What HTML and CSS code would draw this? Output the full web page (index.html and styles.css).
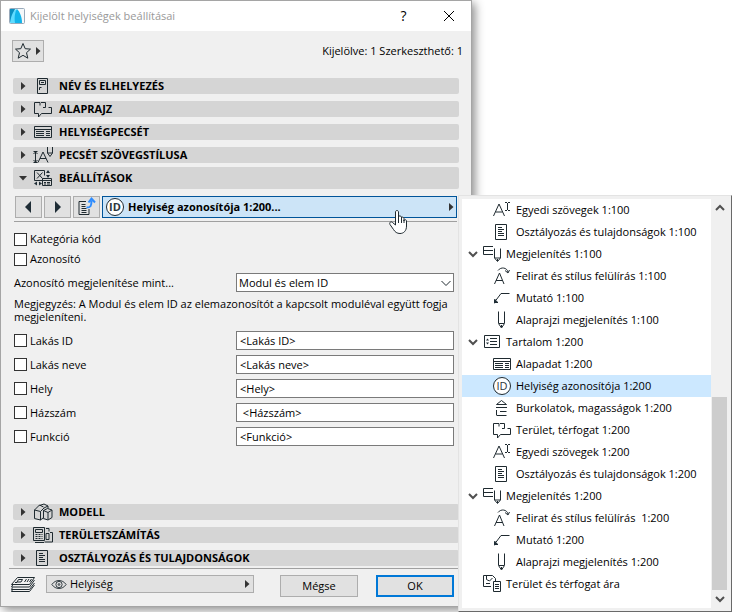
FILE: index.html
```html
<!DOCTYPE html>
<html lang="hu">
<head>
<meta charset="utf-8">
<title>Kijelölt helyiségek beállításai</title>
<link rel="stylesheet" href="styles.css">
</head>
<body>
<svg class="sprite" aria-hidden="true">
  <symbol id="tri-right" viewBox="0 0 8 8"><path class="solid" d="M2 0l4.500 4L2 8z"/></symbol>
  <symbol id="tri-down" viewBox="0 0 8 8"><path class="solid" d="M0 2h8L4 6.500z"/></symbol>
  <symbol id="chevron" viewBox="0 0 10 10"><path class="thick" d="M1 3l4 4 4-4"/></symbol>
  <symbol id="chevron-up" viewBox="0 0 10 10"><path class="thick" d="M1 7l4-4 4 4"/></symbol>
  <symbol id="i-door" viewBox="-1 0 20 20"><path d="M3.500 2.500h10v15h-10zM5.500 4.500h6v4h-6zM7 6.500h3M5.500 14v-2.500h2"/></symbol>
  <symbol id="i-plan" viewBox="-1 0 20 20"><path d="M6 3.500H.5v11h4v3.500l3-3.500h10v-6h-3M6 3.500v3M7 3.500h4.500v5M11.500 8.500H9"/></symbol>
  <symbol id="i-stamp" viewBox="-1 0 20 20"><path d="M.5 4.500h17v11h-17zM.5 7.500h17M2 9.500h8M12 9.500h4M2 11.500h8M12 11.500h4M2 13.500h8M12 13.500h4"/></symbol>
  <symbol id="i-textstyle" viewBox="-1 0 20 20"><path d="M-.5 6.500h4M1.500 7v10M-.5 17.500h4M-.5 9l2-2 2 2M-.5 15l2 2 2-2M4 17.500L9 7l5 10.500M6 13.500h6M13.500 2v6l2.500 3.500L18.500 8V2M13.500 8h5"/></symbol>
  <symbol id="i-settings" viewBox="-1 0 20 20"><path d="M8 12.500H.5v-10h10v5M3 4.500l5.500 6M8.500 4.500l-5.500 6M8.500 10.500h9v7h-9zM8.500 12.500h9M10 14.500h2M13 14.500h3M10 16h2M13 16h3"/><path class="ink" d="M12 5l2-3 2 3zM12 7l2 3 2-3zM3 13.500v4l-3-2zM5 13.500v4l3-2z"/></symbol>
  <symbol id="i-model" viewBox="-1 0 20 20"><path d="M.5 8l5-5 4 2M.5 8v8.500l6 1.500V9.500zM6.500 9.500L10 6M6.500 18l2.500-2M9.500 8.500l4-2 4.500 1.500v7.500l-4 2.500-4.500-1.500zM14 10.500v7M9.500 8.500l4.500 2 4-2.500M5.500 3.500L10 2l4 2-4 2M14 4v2.500"/></symbol>
  <symbol id="i-area" viewBox="-1 0 20 20"><path d="M-.5 2.500h11v13h-11zM1.500 4.500h7v3h-7zM12 3.500h3v3M12 8.500h3v6h-3zM16 7.500h2.500v9.500h-8M1 17.500h9"/><path class="dash" d="M1.500 9.500h7M1.500 11.500h7M1.500 13.500h7"/></symbol>
  <symbol id="i-doc" viewBox="-1 0 20 20"><path d="M2.500 2.500h11v15h-11zM5 5.500h4M5 7.500h6M5 9.500h4M5 11.500h6M5 13.500h6"/></symbol>
  <symbol id="i-id" viewBox="0 0 20 20"><circle class="disc" cx="10" cy="10" r="8.500"/><text x="10" y="14" text-anchor="middle">ID</text></symbol>
  <symbol id="i-text" viewBox="0 0 20 20"><path d="M1.500 16L7 4l5.500 12M3.500 12h7M13 2.500h2M16 2.500h2M15.500 3v7M13 10.500h2M16 10.500h2"/></symbol>
  <symbol id="i-view" viewBox="0 0 20 20"><path d="M11 2.500H1.500v8H11M1.500 6.500H11M12.500 4.500v9.500l3 3.500 3-3.500V4.500M13 14h5M15.500 15v2"/></symbol>
  <symbol id="i-override" viewBox="0 0 20 20"><path d="M2.500 18L7.500 7l4.500 11M4 14.500h6.500M6 4.500c3-4 9-3 10 1.500M13 4.500l3 2.500 1.500-3"/></symbol>
  <symbol id="i-pointer" viewBox="0 0 20 20"><path d="M17.500 5.500H9L3 13.500M3 11v3.500h3"/><path class="ink" d="M2 11v4.500l4-1.500z"/></symbol>
  <symbol id="i-pen" viewBox="0 0 20 20"><path d="M6.500 1.500v12l3 4.500 3-4.500v-12M7 13.500h5M9.500 15v2"/></symbol>
  <symbol id="i-content" viewBox="0 0 20 20"><path d="M2.500 3.500h15v12h-15zM8 6.500h7M8 9.500h7M8 12.500h7"/><path class="ink" d="M4 8.500l1.500-2 1.500 2zM4 10.500l1.500 2 1.500-2z"/></symbol>
  <symbol id="i-height" viewBox="0 0 20 20"><path d="M4.500 6.500L9.500 2.500l5 4zM4 9.500h11M4.500 12v5M4.500 17.500h10M8 13.500h6.500"/></symbol>
  <symbol id="i-price" viewBox="0 0 20 20"><path d="M9 12.500H1.500v-11h9l3 3V7M4.500 2v3.500l3 1.500 3-3M4 9.500h4M11.500 7.500h7v10h-7zM13 10.500h4M13 12.500h4M13 14.500h4"/></symbol>
</svg>

<main class="dialog">
  <header class="titlebar">
    <svg class="logo" viewBox="0 0 16 16" aria-hidden="true"><rect class="logo-card" x=".5" y=".5" width="15" height="15" rx="1"/><path class="logo-dark" d="M1 1h5L2 14H1z"/><path class="logo-mid" d="M1 15C2 8 4 3 7 1l2 2-3 12z"/><path class="logo-light" d="M6 15C5 9 6 4 8 1c3 3 5 8 5 14z"/></svg>
    <h1>Kijelölt helyiségek beállításai</h1>
    <button class="window-btn" aria-label="Súgó">?</button>
    <button class="window-btn" aria-label="Bezárás"><svg viewBox="0 0 12 12"><path class="cross" d="M1 1l10 10M11 1L1 11"/></svg></button>
  </header>

  <div class="content">
    <div class="topbar">
      <button class="btn favorites" aria-label="Kedvencek"><svg class="star" viewBox="0 0 18 18"><path d="M9 1.500l2.200 5.200 5.300.4-4 3.600 1.300 5.500L9 13.300l-4.800 2.900 1.300-5.500-4-3.600 5.300-.4z"/></svg><svg class="tri"><use href="#tri-right"/></svg></button>
      <span>Kijelölve: 1 Szerkeszthető: 1</span>
    </div>

    <button class="bar"><svg class="tri"><use href="#tri-right"/></svg><svg class="icon"><use href="#i-door"/></svg>NÉV ÉS ELHELYEZÉS</button>
    <button class="bar"><svg class="tri"><use href="#tri-right"/></svg><svg class="icon"><use href="#i-plan"/></svg>ALAPRAJZ</button>
    <button class="bar"><svg class="tri"><use href="#tri-right"/></svg><svg class="icon"><use href="#i-stamp"/></svg>HELYISÉGPECSÉT</button>
    <button class="bar"><svg class="tri"><use href="#tri-right"/></svg><svg class="icon"><use href="#i-textstyle"/></svg>PECSÉT SZÖVEGSTÍLUSA</button>
    <button class="bar open" aria-expanded="true"><svg class="tri"><use href="#tri-down"/></svg><svg class="icon"><use href="#i-settings"/></svg>BEÁLLÍTÁSOK</button>

    <section class="settings">
      <div class="pager">
        <button class="btn" aria-label="Előző"><svg class="arrow" viewBox="0 0 12 12"><path class="ink" d="M8 0v12L2 6z"/></svg></button>
        <button class="btn" aria-label="Következő"><svg class="arrow" viewBox="0 0 12 12"><path class="ink" d="M3 0v12l6-6z"/></svg></button>
        <button class="btn" aria-label="Lapok"><svg class="icon" viewBox="0 0 20 20"><path d="M9 4.500H2v13h10V12M4.500 7.500h4M4.500 9.500h4M4.500 11.500h5M4.500 13.500h5M4.500 15.500h5"/><path class="blue" d="M9.500 10.500c4 0 5-1 5-7M11.500 5.500l3-4 3.500 4"/></svg></button>
        <button class="page-select"><svg class="icon"><use href="#i-id"/></svg><span>Helyiség azonosítója 1:200...</span><svg class="tri"><use href="#tri-right"/></svg></button>
        <svg class="hand" viewBox="0 0 20 26" aria-hidden="true"><path d="M7.500 16V3c0-2 3-2 3 0v7-2c0-1.500 2.500-1.500 3 0v3-2c0-1.500 2.500-1 2.500.5V12c0-2 2.500-1.500 2.500 0v5c0 5-3 7.500-6.500 7.500-3 0-5-1.500-6.500-4L2 15.500c-1-2 1-3.500 2.500-2z"/><path d="M10.500 9v5M13.500 10v4M16 11v3"/></svg>
      </div>

      <label class="check"><input type="checkbox">Kategória kód</label>
      <label class="check"><input type="checkbox">Azonosító</label>

      <div class="pair display">
        <label for="mode">Azonosító megjelenítése mint...</label>
        <div class="select"><select id="mode"><option>Modul és elem ID</option></select><svg viewBox="0 0 10 10" aria-hidden="true"><path d="M.5 3L5 7.500 9.500 3"/></svg></div>
      </div>
      <p class="note">Megjegyzés: A Modul és elem ID az elemazonosítót a kapcsolt moduléval együtt fogja megjeleníteni.</p>

      <div class="pair"><label class="check"><input type="checkbox">Lakás ID</label><input class="field" aria-label="Lakás ID" value="&lt;Lakás ID&gt;"></div>
      <div class="pair"><label class="check"><input type="checkbox">Lakás neve</label><input class="field" aria-label="Lakás neve" value="&lt;Lakás neve&gt;"></div>
      <div class="pair"><label class="check"><input type="checkbox">Hely</label><input class="field" aria-label="Hely" value="&lt;Hely&gt;"></div>
      <div class="pair"><label class="check"><input type="checkbox">Házszám</label><input class="field" aria-label="Házszám" value=" &lt;Házszám&gt;"></div>
      <div class="pair"><label class="check"><input type="checkbox">Funkció</label><input class="field" aria-label="Funkció" value="&lt;Funkció&gt;"></div>
    </section>

    <button class="bar"><svg class="tri"><use href="#tri-right"/></svg><svg class="icon"><use href="#i-model"/></svg>MODELL</button>
    <button class="bar"><svg class="tri"><use href="#tri-right"/></svg><svg class="icon"><use href="#i-area"/></svg>TERÜLETSZÁMÍTÁS</button>
    <button class="bar"><svg class="tri"><use href="#tri-right"/></svg><svg class="icon"><use href="#i-doc"/></svg>OSZTÁLYOZÁS ÉS TULAJDONSÁGOK</button>
  </div>

  <footer class="footer">
    <svg class="layers" viewBox="0 0 26 18" aria-hidden="true"><path d="M7.500 2.500h17l-5 7H1.500zM3 9.500l-1.500 2.500h18l5-7M2.500 12.500l-1 2h18l5-6.500M2.500 14.500l-1 2h18l5-6.500M8.500 4.500h4l-1.500 2.500H7zM16.500 4l-2 3M19 4l-2 3M21.500 4l-2 3M7 7.500h-2"/></svg>
    <button class="btn layer"><svg class="eye" viewBox="0 0 18 12"><path d="M1 6c4-6 12-6 16 0-4 6-12 6-16 0z"/><circle cx="9" cy="6" r="3.500"/><circle cx="9" cy="6" r="1"/></svg><span>Helyiség</span><svg class="tri"><use href="#tri-right"/></svg></button>
    <button class="btn action">Mégse</button>
    <button class="btn action primary">OK</button>
  </footer>
</main>

<aside class="popup">
  <ul class="tree">
    <li><button class="child"><svg class="icon"><use href="#i-text"/></svg>Egyedi szövegek 1:100</button></li>
    <li><button class="child"><svg class="icon"><use href="#i-doc"/></svg>Osztályozás és tulajdonságok 1:100</button></li>
    <li><button><svg class="chev"><use href="#chevron"/></svg><svg class="icon"><use href="#i-view"/></svg>Megjelenítés 1:100</button></li>
    <li><button class="child"><svg class="icon"><use href="#i-override"/></svg>Felirat és stílus felülírás 1:100</button></li>
    <li><button class="child"><svg class="icon"><use href="#i-pointer"/></svg>Mutató 1:100</button></li>
    <li><button class="child"><svg class="icon"><use href="#i-pen"/></svg>Alaprajzi megjelenítés 1:100</button></li>
    <li><button><svg class="chev"><use href="#chevron"/></svg><svg class="icon"><use href="#i-content"/></svg>Tartalom 1:200</button></li>
    <li><button class="child"><svg class="icon"><use href="#i-stamp"/></svg>Alapadat 1:200</button></li>
    <li><button class="child selected"><svg class="icon"><use href="#i-id"/></svg>Helyiség azonosítója 1:200</button></li>
    <li><button class="child"><svg class="icon"><use href="#i-height"/></svg>Burkolatok, magasságok 1:200</button></li>
    <li><button class="child"><svg class="icon"><use href="#i-plan"/></svg>Terület, térfogat 1:200</button></li>
    <li><button class="child"><svg class="icon"><use href="#i-text"/></svg>Egyedi szövegek 1:200</button></li>
    <li><button class="child"><svg class="icon"><use href="#i-doc"/></svg>Osztályozás és tulajdonságok 1:200</button></li>
    <li><button><svg class="chev"><use href="#chevron"/></svg><svg class="icon"><use href="#i-view"/></svg>Megjelenítés 1:200</button></li>
    <li><button class="child"><svg class="icon"><use href="#i-override"/></svg>Felirat és stílus felülírás&nbsp; 1:200</button></li>
    <li><button class="child"><svg class="icon"><use href="#i-pointer"/></svg>Mutató 1:200</button></li>
    <li><button class="child"><svg class="icon"><use href="#i-pen"/></svg>Alaprajzi megjelenítés 1:200</button></li>
    <li><button class="leaf"><svg class="icon"><use href="#i-price"/></svg>Terület és térfogat ára</button></li>
  </ul>
  <div class="scrollbar" aria-hidden="true">
    <svg class="chev"><use href="#chevron-up"/></svg>
    <div class="thumb"></div>
    <svg class="chev"><use href="#chevron"/></svg>
  </div>
</aside>
</body>
</html>
```

FILE: styles.css
```css
* { box-sizing: border-box; }

body {
  margin: 0;
  min-height: 100vh;
  position: relative;
  overflow: hidden;
  background: #fff;
  color: #000;
  font: 11px/14px "Open Sans", "Noto Sans", sans-serif;
}

button, input, select { font: inherit; color: inherit; }
button { margin: 0; padding: 0; border: 0; background: none; text-align: left; }
svg { flex: none; fill: none; stroke: #1f2a30; stroke-width: 1; overflow: visible; }
symbol { overflow: visible; }
.sprite { position: absolute; width: 0; height: 0; }
.solid { fill: #333; stroke: none; }
.ink { fill: #1f2d36; stroke: none; }
.thick { stroke: #505050; stroke-width: 2; }
.dash { stroke-dasharray: 2 1; }
.disc { fill: #fff; }
.blue { stroke: #2d8cff; stroke-width: 2; }
symbol text { font-size: 11px; fill: #2b363c; stroke: none; }
.tri { width: 8px; height: 8px; }
.icon { width: 20px; height: 20px; }
.chev { width: 10px; height: 10px; }

.dialog {
  display: flex;
  flex-direction: column;
  min-height: calc(100vh - 5px);
  margin-right: 260px;
  border: 1px solid #a5a5a5;
  background: #f0f0f0;
  box-shadow: 3px 3px 9px rgba(0, 0, 0, .45);
}

.titlebar { display: flex; align-items: center; height: 30px; padding-left: 8px; background: #fff; }
.logo { width: 16px; height: 16px; }
.logo-card { fill: #f4f8fa; stroke: #9ab; }
.logo-dark { fill: #0a8fc0; stroke: none; }
.logo-mid { fill: #5fdcff; stroke: none; }
.logo-light { fill: #12b4ea; stroke: none; }
.titlebar h1 { flex: 1; margin: 0 0 0 5px; font-size: 11px; font-weight: 400; color: #999; }
.window-btn { display: grid; place-items: center; width: 45px; height: 28px; font-size: 14px; }
.window-btn svg { width: 12px; height: 12px; }
.cross { stroke: #000; }

.content { flex: 1; display: flex; flex-direction: column; padding: 0 12px; }
.topbar { display: flex; justify-content: space-between; align-items: center; height: 40px; margin: 0 -4px 0 -1px; }
.btn { display: flex; align-items: center; justify-content: center; border: 1px solid #adadad; background: #e1e1e1; }
.favorites { width: 32px; height: 22px; gap: 2px; }
.star { width: 18px; height: 18px; }

.bar {
  display: flex;
  align-items: center;
  gap: 6px;
  height: 16px;
  margin-top: 7px;
  padding-left: 6px;
  border-radius: 2px;
  background: #d5d5d5;
  font-weight: 700;
}
.bar.open { height: 22px; margin-top: 4px; }

.settings { flex: 1; padding: 7px 2px 0 1px; }
.pager { position: relative; display: flex; gap: 2px; height: 26px; padding-left: 1px; margin-bottom: 10px; border-bottom: 1px solid #a0a0a0; }
.pager .btn { width: 27px; height: 22px; }
.arrow { width: 12px; height: 12px; }
.page-select { flex: 1; display: flex; align-items: center; gap: 3px; height: 22px; padding: 0 1px 0 2px; border: 1px solid #005499; background: #cce4f7; font-weight: 700; }
.page-select span { flex: 1; }
.hand { position: absolute; right: 49px; top: 13px; width: 20px; height: 26px; fill: #fff; }

.check { display: flex; align-items: center; gap: 3px; height: 14px; }
.check + .check { margin: 6px 0 7px; }
.check input { appearance: none; width: 13px; height: 13px; margin: 0; border: 1px solid #333; background: #fff; }
.pair { display: grid; grid-template-columns: 1fr 218px; align-items: center; height: 19px; margin: 0 3px 5px 0; }
.display { margin-bottom: 5px; }
.field { width: 100%; height: 19px; padding: 0 3px; border: 1px solid #7a7a7a; background: #fff; }
.select { display: grid; align-items: center; }
.select select, .select svg { grid-area: 1 / 1; }
.select select { appearance: none; width: 100%; height: 19px; padding: 0 2px; border: 1px solid #7a7a7a; border-radius: 0; background: #fff; }
.select svg { justify-self: end; width: 10px; height: 10px; margin-right: 3px; pointer-events: none; }
.note { margin: 0 -2px 8px 0; line-height: 13px; }

.footer { display: flex; align-items: flex-start; margin: 2px 12px 0 8px; padding: 6px 5px 9px 1px; border-top: 1px solid #a0a0a0; }
.layers { width: 26px; height: 18px; margin-right: 10px; }
.layer { flex: 1; height: 18px; padding: 0 2px 0 4px; gap: 3px; }
.layer span { flex: 1; }
.eye { width: 16px; height: 11px; }
.action { width: 78px; height: 22px; margin-left: 26px; }
.action + .action { margin-left: 18px; }
.primary { border: 2px solid #0078d7; }

.popup {
  position: absolute;
  top: 195px;
  right: 0;
  bottom: 0;
  width: 274px;
  display: flex;
  padding: 3px;
  border: 1px solid #e3e3e3;
  border-right: 1px solid #696969;
  border-bottom: 1px solid #696969;
  background: #f0f0f0;
}
.tree { flex: 1; margin: 0; padding: 0; list-style: none; background: #fff; }
.tree button { display: flex; align-items: center; gap: 4px; width: 100%; height: 22px; padding-left: 6px; white-space: nowrap; }
.tree .child { padding-left: 30px; }
.tree .leaf { padding-left: 20px; }
.tree .selected { background: #cce8ff; }
.scrollbar { display: flex; flex-direction: column; align-items: center; width: 17px; padding: 4px 0; }
.thumb { width: 15px; height: 193px; margin: auto 0 4px; background: #cdcdcd; }
```
